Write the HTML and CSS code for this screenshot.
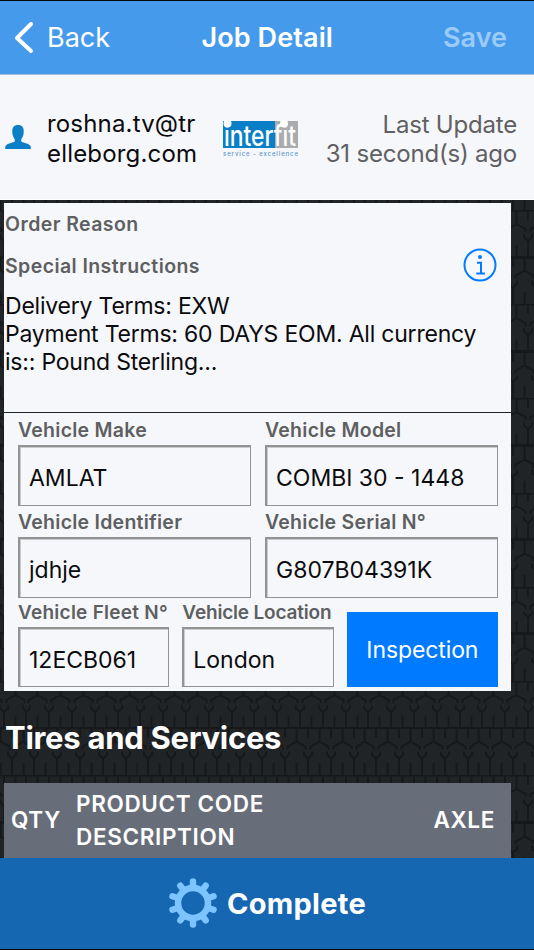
FILE: index.html
```html
<!DOCTYPE html>
<html lang="en">
<head>
    <meta charset="UTF-8">
    <meta name="viewport" content="width=device-width, initial-scale=1.0">
    <title>Job Detail</title>
    <link rel="stylesheet" href="styles.css">
</head>
<body>
    <div class="app">
        <nav class="navbar">
            <a class="nav-back" href="#">
                <svg width="20" height="34" viewBox="0 0 20 34"><path d="M17 3 3 17l14 13" fill="none" stroke="#fff" stroke-width="4" stroke-linecap="round" stroke-linejoin="round"/></svg>
                <span>Back</span>
            </a>
            <h1 class="nav-title">Job Detail</h1>
            <a class="nav-save" href="#">Save</a>
        </nav>

        <header class="user-bar">
            <svg class="user-icon" width="26" height="24" viewBox="0 0 26 24"><path d="M13 0c4 0 6 2.500 5.700 7 0 4-1.500 5.500-2.500 7.500v2c2 1.500 9.300 2 9.600 5.500v2H.2v-2c.3-3.500 7.600-4 9.600-5.500v-2C8.800 12.500 7.300 11 7.300 7 7 2.500 9 0 13 0z" fill="#0a7fc8"/></svg>
            <div class="user-email">roshna.tv@tr<br>elleborg.com</div>
            <svg class="logo" width="76" height="40" viewBox="0 0 76 40">
                <path d="M0 0h9v9H0z"/>
                <path d="M0 1h52v27H0z" fill="#0a7fc8"/>
                <path d="M52 1h23v27H52z" fill="#aaabac"/>
                <text class="logo-name" x="1" y="25.500" textLength="72" lengthAdjust="spacingAndGlyphs">interfit</text>
                <circle cx="4.500" cy="3.500" r="4"/>
                <circle cx="61" cy="3.500" r="4"/>
                <text class="logo-tag" x="0" y="36" textLength="75">service - excellence</text>
            </svg>
            <div class="last-update">Last Update<br>31 second(s) ago</div>
        </header>

        <main class="content">
            <section class="panel">
                <div class="order">
                    <h2 class="label">Order Reason</h2>
                    <div class="instructions-head">
                        <h2 class="label">Special Instructions</h2>
                        <svg width="34" height="34" viewBox="0 0 34 34" fill="none" stroke="#007aff" stroke-width="2">
                            <circle cx="17" cy="17" r="15.500"/>
                            <path d="M14 14.800h4v10.400M13.300 25.500h8.600"/>
                            <circle cx="17" cy="9" r="2" fill="#007aff" stroke="none"/>
                        </svg>
                    </div>
                    <p class="instructions">Delivery Terms: EXW<br>Payment Terms: 60 DAYS EOM. All currency<br>is:: Pound Sterling...</p>
                </div>
                <div class="vehicle">
                    <div class="row">
                        <div class="field">
                            <label class="label">Vehicle Make</label>
                            <div class="value">AMLAT</div>
                        </div>
                        <div class="field">
                            <label class="label">Vehicle Model</label>
                            <div class="value">COMBI 30 - 1448</div>
                        </div>
                    </div>
                    <div class="row">
                        <div class="field">
                            <label class="label">Vehicle Identifier</label>
                            <div class="value">jdhje</div>
                        </div>
                        <div class="field">
                            <label class="label">Vehicle Serial N°</label>
                            <div class="value">G807B04391K</div>
                        </div>
                    </div>
                    <div class="row row-last">
                        <div class="field">
                            <label class="label">Vehicle Fleet N°</label>
                            <div class="value">12ECB061</div>
                        </div>
                        <div class="field">
                            <label class="label label-location">Vehicle Location</label>
                            <div class="value">London</div>
                        </div>
                        <button class="inspection" type="button">Inspection</button>
                    </div>
                </div>
            </section>

            <h2 class="section-title">Tires and Services</h2>

            <div class="table-head">
                <span class="col-qty">QTY</span>
                <span class="col-product">PRODUCT CODE<br>DESCRIPTION</span>
                <span class="col-axle">AXLE</span>
            </div>
        </main>

        <footer class="complete-bar">
            <svg width="50" height="52" viewBox="-25 -25 50 50" fill="none" stroke="#7cc4ff">
                <circle r="15" stroke-width="6.500"/>
                <g stroke-width="6.400" stroke-linecap="round">
                    <path id="tooth" d="M0-17v-4.600"/>
                    <use href="#tooth" transform="rotate(36)"/>
                    <use href="#tooth" transform="rotate(72)"/>
                    <use href="#tooth" transform="rotate(108)"/>
                    <use href="#tooth" transform="rotate(144)"/>
                    <use href="#tooth" transform="rotate(180)"/>
                    <use href="#tooth" transform="rotate(216)"/>
                    <use href="#tooth" transform="rotate(252)"/>
                    <use href="#tooth" transform="rotate(288)"/>
                    <use href="#tooth" transform="rotate(324)"/>
                </g>
            </svg>
            <span>Complete</span>
        </footer>
    </div>
</body>
</html>
```
FILE: styles.css
```css
* {
    box-sizing: border-box;
}

body {
    margin: 0;
    font-family: Inter, 'Liberation Sans', sans-serif;
    font-size: 23px;
    color: #0b0b0d;
    background-color: #202427;
    /* tyre tread */
    background-image: url("data:image/svg+xml;charset=UTF-8,%3csvg xmlns='http://www.w3.org/2000/svg' width='22.8' height='94.2' viewBox='0 0 22.8 94.2' fill='none' stroke='%2316181a' stroke-width='2'%3e%3cdefs%3e%3cg id='t'%3e%3cpath stroke-width='3' d='M-40 0h80'/%3e%3cpath d='M0 0v14M0 35v12M-11.4 0v10M11.4 0v10M-9 22v-3l9-5 9 5v3M-11.4 47V31l-4-4v-3M-11.4 31l4-4v-3M11.4 47V31l-4-4v-3M11.4 31l4-4v-3'/%3e%3c/g%3e%3c/defs%3e%3cuse href='%23t' x='11.4'/%3e%3cuse href='%23t' x='-3.4' y='47.1'/%3e%3cuse href='%23t' x='19.400' y='47.1'/%3e%3c/svg%3e");
    background-position: 3.7px 21.6px;
}

h1,
h2,
p {
    margin: 0;
}

a {
    text-decoration: none;
}

.app {
    height: 950px;
    display: flex;
    flex-direction: column;
    overflow: hidden;
    border-top: 1px solid #05070c;
    border-bottom: 1px solid #05070c;
}

.navbar {
    height: 74px;
    flex: none;
    display: flex;
    justify-content: space-between;
    align-items: center;
    padding: 0 27px 0 14px;
    background: #469aeb;
    border-bottom: 1px solid #a5bddb;
    font-size: 27px;
    color: #fff;
}

.nav-back {
    display: flex;
    flex: 1;
    align-items: center;
    gap: 13px;
    color: #fff;
}

.nav-title {
    font-size: 27px;
    font-weight: 600;
    letter-spacing: 0.1px;
}

.nav-save {
    width: 174px;
    text-align: right;
    font-weight: 600;
    color: #9bcbf8;
}

.user-bar {
    height: 125px;
    flex: none;
    display: flex;
    align-items: center;
    padding: 0 17px 0 5px;
    background: #f6f7fb;
    border-bottom: 1px solid #fff;
}

.user-icon {
    margin-bottom: 1px;
}

.user-email {
    width: 176px;
    margin: 3px 0 0 16px;
    font-size: 24px;
    line-height: 30px;
    letter-spacing: 0.17px;
}

.logo {
    margin-top: 6px;
    fill: #fff;
    overflow: visible;
}

.logo-name {
    font: 500 28px Inter, sans-serif;
}

.logo-tag {
    font: 500 6px Inter, sans-serif;
    fill: #5b96cc;
}

.last-update {
    margin: 3px 0 0 auto;
    text-align: right;
    font-size: 24px;
    line-height: 29px;
    letter-spacing: -0.2px;
    color: #606062;
    white-space: nowrap;
}

.content {
    flex: 1;
    padding: 3px 23px 0 4px;
}

.panel {
    height: 488px;
    background: #f6f7fb;
}

.label {
    display: block;
    font-size: 19.500px;
    line-height: 24px;
    font-weight: 600;
    letter-spacing: 0.25px;
    color: #5e5f61;
    white-space: nowrap;
}

.order {
    height: 210px;
    padding: 9px 14px 0 1px;
    border-bottom: 1px solid #202427;
}

.order .label {
    letter-spacing: 0.42px;
}

.instructions-head {
    display: flex;
    justify-content: space-between;
    align-items: center;
    margin-top: 12px;
}

.instructions-head .label {
    padding-top: 2px;
}

.instructions {
    margin-top: 10px;
    line-height: 28px;
    letter-spacing: -0.21px;
    white-space: nowrap;
}

.vehicle {
    padding: 5px 13px 0 14px;
}

.row {
    display: flex;
    gap: 14px;
    height: 92px;
}

.field {
    flex: 1;
    min-width: 0;
}

.value {
    height: 61px;
    margin-top: 3px;
    padding-left: 9px;
    border: 1px solid #929493;
    border-width: 2px 1px 1px 2px;
    box-shadow: inset 1px 1px 0 #c9cbcc;
    line-height: 63px;
    white-space: nowrap;
}

.row-last {
    height: 85px;
    gap: 13px;
    align-items: flex-end;
}

.row-last .label {
    font-size: 19px;
}

.row-last .label-location {
    letter-spacing: -0.18px;
}

.row-last .value {
    height: 60px;
    margin-top: 2px;
}

.inspection {
    flex: 1;
    height: 75px;
    padding: 0;
    border: none;
    background: #007aff;
    color: #fff;
    font-family: inherit;
    font-size: 23px;
    letter-spacing: -0.1px;
}

.section-title {
    padding: 28px 1px 0;
    height: 92px;
    font-size: 31px;
    line-height: 38px;
    font-weight: 700;
    letter-spacing: -0.28px;
    color: #fff;
}

.table-head {
    display: flex;
    align-items: center;
    height: 75px;
    padding: 0 16px 2px 7px;
    background: #676e79;
    color: #fff;
    font-size: 22.500px;
    line-height: 33px;
    font-weight: 600;
    letter-spacing: 0.65px;
}

.col-qty {
    width: 65px;
}

.col-axle {
    margin-left: auto;
}

.complete-bar {
    height: 92px;
    flex: none;
    display: flex;
    align-items: center;
    justify-content: center;
    gap: 9px;
    padding-bottom: 2px;
    background: #1667b1;
    color: #fff;
    font-size: 29px;
    font-weight: 700;
    letter-spacing: 0.3px;
}
```
